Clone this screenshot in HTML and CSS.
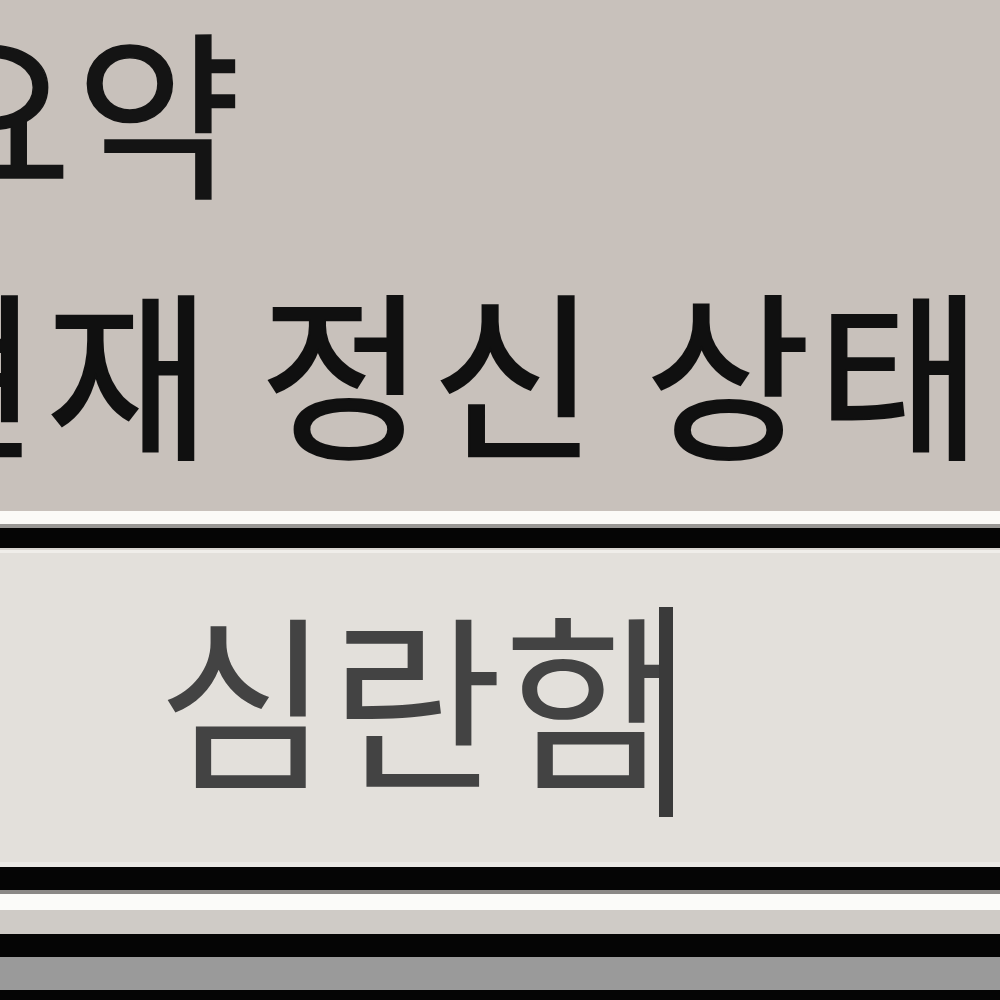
FILE: index.html
```html
<!DOCTYPE html>
<html lang="ko">
<head>
<meta charset="utf-8">
<link rel="stylesheet" href="styles.css">
</head>
<body>
<div class="page">
  <section class="summary">
    <div class="title">요약</div>
    <div class="label">현재 정신 상태</div>
  </section>
  <div class="rule-top"></div>
  <div class="field">
    <span class="value">심란함</span><span class="caret"></span>
  </div>
  <div class="rule-bottom"></div>
</div>
</body>
</html>
```
FILE: styles.css
```css
html, body {
  margin: 0;
  padding: 0;
  background: #c8c1bb;
}
.page {
  width: 1000px;
  height: 1000px;
  overflow: hidden;
  display: flex;
  flex-direction: column;
  font-family: "Noto Sans CJK KR", "Noto Sans", sans-serif;
}
.summary {
  height: 511px;
  background: #c8c1bb;
  box-sizing: border-box;
  padding-top: 16px;
  white-space: nowrap;
}
.title {
  font-size: 180px;
  line-height: 180px;
  color: #141414;
  margin-left: -94px;
  letter-spacing: 4px;
  -webkit-text-stroke: 1.5px #141414;
}
.label {
  font-size: 180px;
  line-height: 180px;
  color: #101010;
  margin-top: 81px;
  margin-left: -126px;
  letter-spacing: 6px;
  word-spacing: -14px;
  -webkit-text-stroke: 2px #101010;
}
.rule-top {
  height: 42px;
  background: linear-gradient(#fbfaf7 0 13px, #9a9895 13px 17px, #050505 17px 37px, #d8d5d0 37px 39px, #f0eeea 39px 42px);
}
.field {
  height: 309px;
  background: #e3e0db;
  display: flex;
  align-items: center;
  padding-left: 157px;
  white-space: nowrap;
}
.value {
  font-size: 188px;
  line-height: 200px;
  color: #434343;
  margin-bottom: 30px;
}
.caret {
  display: inline-block;
  width: 14px;
  height: 210px;
  background: #3a3a3a;
  margin-left: -17px;
  margin-top: 8px;
}
.rule-bottom {
  flex: 1;
  background: linear-gradient(#ebe9e5 0 5px, #050505 5px 28px, #8a8886 28px 32px, #fbfbf9 32px 48px, #cfcbc6 48px 72px, #050505 72px 95px, #9a9a9a 95px 128px, #050505 128px);
}
```
